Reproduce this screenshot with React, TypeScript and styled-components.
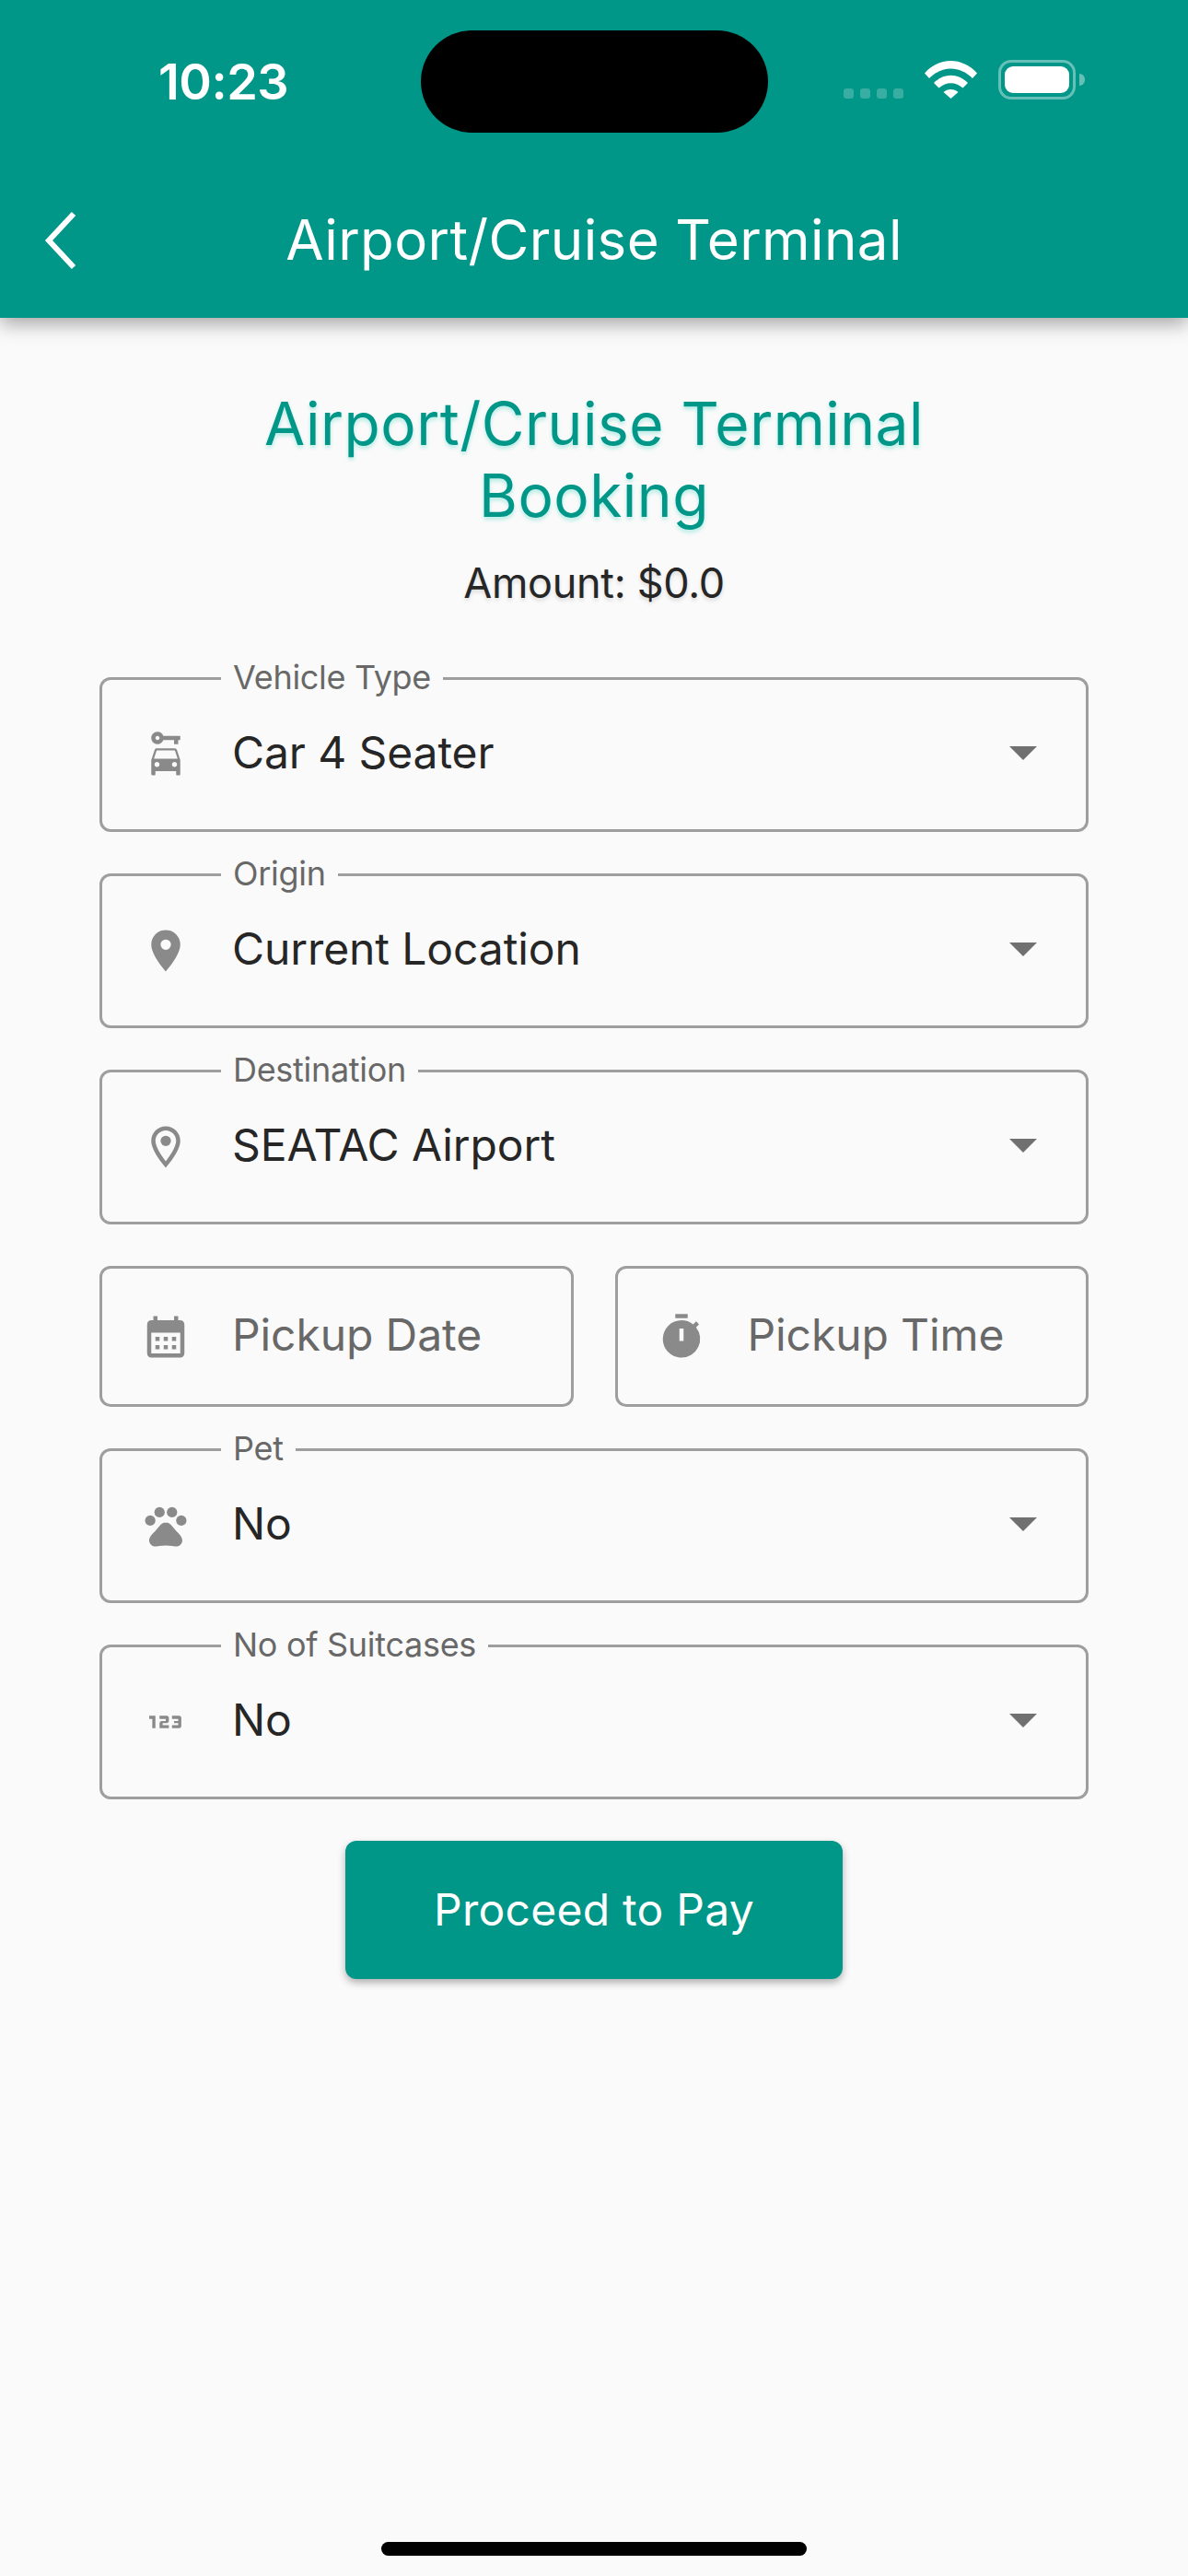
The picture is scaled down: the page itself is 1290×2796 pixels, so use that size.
import * as React from 'react';
import styled, { createGlobalStyle } from 'styled-components';
import {
  Md123,
  MdArrowDropDown,
  MdCalendarMonth,
  MdCarRental,
  MdLocationOn,
  MdOutlineLocationOn,
  MdPets,
  MdTimer,
} from 'react-icons/md';

const GlobalStyle = createGlobalStyle`
  html, body {
    margin: 0;
    padding: 0;
    background: #fafafa;
  }
  * {
    box-sizing: border-box;
  }
`;

const Screen = styled.div`
  width: 1290px;
  height: 2796px;
  display: flex;
  flex-direction: column;
  background: #fafafa;
  font-family: Inter, Roboto, sans-serif;
  overflow: hidden;
`;

const Header = styled.header`
  height: 345px;
  flex: none;
  background: #009688;
  box-shadow: 0 6px 20px rgba(0, 0, 0, 0.36);
  position: relative;
  z-index: 1;
`;

const StatusBar = styled.div`
  height: 144px;
  padding-top: 33px;
  display: flex;
  align-items: flex-start;
`;

const StatusLeft = styled.div`
  width: 457px;
  height: 111px;
  padding-left: 172px;
  display: flex;
  align-items: center;
`;

const Clock = styled.span`
  font-size: 54px;
  font-weight: 600;
  letter-spacing: -0.5px;
  color: #fff;
  line-height: 1;
`;

const Island = styled.div`
  width: 377px;
  height: 111px;
  background: #000;
  border-radius: 56px;
  flex: none;
`;

const StatusRight = styled.div`
  flex: 1;
  padding-left: 82px;
  padding-top: 32px;
  display: flex;
  align-items: flex-end;
`;

const SignalDots = styled.div`
  display: flex;
  gap: 7px;
  margin-bottom: 1px;
  margin-right: 23px;
`;

const SignalDot = styled.span`
  width: 11px;
  height: 11px;
  border-radius: 3px;
  background: rgba(255, 255, 255, 0.22);
`;

const WifiIcon = styled.svg`
  width: 57px;
  height: 41px;
  margin-right: 23px;
  margin-bottom: 1px;
`;

const Battery = styled.div`
  width: 84px;
  height: 43px;
  padding: 4px;
  border: 3px solid rgba(255, 255, 255, 0.4);
  border-radius: 14px;
  position: relative;
`;

const BatteryFill = styled.div`
  height: 100%;
  background: #fff;
  border-radius: 9px;
`;

const BatteryCap = styled.span`
  position: absolute;
  left: 85px;
  top: 12px;
  width: 6px;
  height: 13px;
  background: rgba(255, 255, 255, 0.4);
  border-radius: 0 6px 6px 0;
`;

const TitleBar = styled.div`
  height: 201px;
  padding-top: 31px;
  display: flex;
  align-items: center;
  justify-content: center;
  position: relative;
`;

const BackIcon = styled.svg`
  position: absolute;
  left: 45px;
  top: 84px;
  width: 42px;
  height: 66px;
`;

const BarTitle = styled.h1`
  margin: 0;
  font-size: 60px;
  font-weight: 400;
  letter-spacing: 0.4px;
  color: #fff;
  line-height: 70px;
`;

const Content = styled.main`
  flex: 1;
  padding: 76px 108px 0;
  display: flex;
  flex-direction: column;
`;

const Heading = styled.h2`
  margin: 0;
  text-align: center;
  font-size: 64px;
  font-weight: 400;
  letter-spacing: 0.5px;
  line-height: 78px;
  color: #009688;
  text-shadow: 0 3px 4px rgba(0, 200, 175, 0.28);
`;

const Amount = styled.p`
  margin: 26px 0 72px;
  text-align: center;
  font-size: 45px;
  letter-spacing: -0.3px;
  line-height: 60px;
  color: #262626;
  text-shadow: 0 3px 4px rgba(0, 0, 0, 0.12);
`;

const Form = styled.div`
  display: flex;
  flex-direction: column;
  gap: 45px;
`;

const PickerRow = styled.div`
  display: flex;
  gap: 45px;
`;

const FieldBox = styled.div<{ $picker?: boolean }>`
  flex: ${(p) => (p.$picker ? '1 1 0' : 'none')};
  height: ${(p) => (p.$picker ? 153 : 168)}px;
  padding: 0 32px 0 42px;
  border: 3px solid #9e9e9e;
  border-radius: 12px;
  display: flex;
  align-items: center;
  position: relative;
`;

const FloatingLabel = styled.span`
  position: absolute;
  left: 129px;
  top: -26px;
  padding: 0 13px;
  background: #fafafa;
  font-size: 36px;
  line-height: 46px;
  letter-spacing: -0.3px;
  color: #686868;
`;

const FieldIcon = styled.span`
  width: 54px;
  height: 54px;
  flex: none;
  display: flex;
  color: #8a8a8a;
  font-size: 54px;
`;

const FieldText = styled.span<{ $placeholder?: boolean }>`
  flex: 1;
  margin-left: 45px;
  margin-bottom: 4px;
  font-size: 48px;
  letter-spacing: -0.1px;
  line-height: 56px;
  color: ${(p) => (p.$placeholder ? '#686868' : '#262626')};
`;

const DropArrow = styled.span`
  width: 72px;
  height: 72px;
  flex: none;
  margin-bottom: 6px;
  display: flex;
  color: #707070;
  font-size: 72px;
`;

const PayButton = styled.button`
  align-self: center;
  width: 540px;
  height: 150px;
  margin-top: 45px;
  padding-bottom: 2px;
  border: 0;
  border-radius: 12px;
  background: #009688;
  box-shadow: 0 4px 9px rgba(0, 0, 0, 0.3);
  font-family: inherit;
  font-size: 48px;
  letter-spacing: 0.25px;
  color: #fff;
`;

const HomeIndicator = styled.div`
  width: 462px;
  height: 15px;
  flex: none;
  margin: 0 auto 22px;
  border-radius: 8px;
  background: #000;
`;

type SelectProps = {
  label: string;
  value: string;
  icon: React.ReactNode;
};

const SelectField = ({ label, value, icon }: SelectProps) => (
  <FieldBox>
    <FloatingLabel>{label}</FloatingLabel>
    <FieldIcon>{icon}</FieldIcon>
    <FieldText>{value}</FieldText>
    <DropArrow>
      <MdArrowDropDown />
    </DropArrow>
  </FieldBox>
);

const PickerField = ({ hint, icon }: { hint: string; icon: React.ReactNode }) => (
  <FieldBox $picker>
    <FieldIcon>{icon}</FieldIcon>
    <FieldText $placeholder>{hint}</FieldText>
  </FieldBox>
);

const App = () => (
  <Screen>
    <GlobalStyle />
    <Header>
      <StatusBar>
        <StatusLeft>
          <Clock>10:23</Clock>
        </StatusLeft>
        <Island />
        <StatusRight>
          <SignalDots>
            <SignalDot />
            <SignalDot />
            <SignalDot />
            <SignalDot />
          </SignalDots>
          <WifiIcon viewBox="0 0 57 41">
            <path
              fill="#fff"
              d="M0 13.5 C16 -4.5 41 -4.5 57 13.5 L52 19 C38 5 19 5 5 19 Z M10 24 C21 13 36 13 47 24 L41.5 29.5 C33 22.5 24 22.5 15.5 29.5 Z M20.5 34 C25 30 32 30 36.5 34 L28.5 41 Z"
            />
          </WifiIcon>
          <Battery>
            <BatteryFill />
            <BatteryCap />
          </Battery>
        </StatusRight>
      </StatusBar>
      <TitleBar>
        <BackIcon viewBox="0 0 42 66">
          <path d="M35 4 L8 33 L35 62" fill="none" stroke="#fff" strokeWidth="6" />
        </BackIcon>
        <BarTitle>Airport/Cruise Terminal</BarTitle>
      </TitleBar>
    </Header>
    <Content>
      <Heading>
        Airport/Cruise Terminal
        <br />
        Booking
      </Heading>
      <Amount>Amount: $0.0</Amount>
      <Form>
        <SelectField label="Vehicle Type" value="Car 4 Seater" icon={<MdCarRental />} />
        <SelectField label="Origin" value="Current Location" icon={<MdLocationOn />} />
        <SelectField label="Destination" value="SEATAC Airport" icon={<MdOutlineLocationOn />} />
        <PickerRow>
          <PickerField hint="Pickup Date" icon={<MdCalendarMonth />} />
          <PickerField hint="Pickup Time" icon={<MdTimer />} />
        </PickerRow>
        <SelectField label="Pet" value="No" icon={<MdPets />} />
        <SelectField label="No of Suitcases" value="No" icon={<Md123 />} />
      </Form>
      <PayButton>Proceed to Pay</PayButton>
    </Content>
    <HomeIndicator />
  </Screen>
);

export default App;
